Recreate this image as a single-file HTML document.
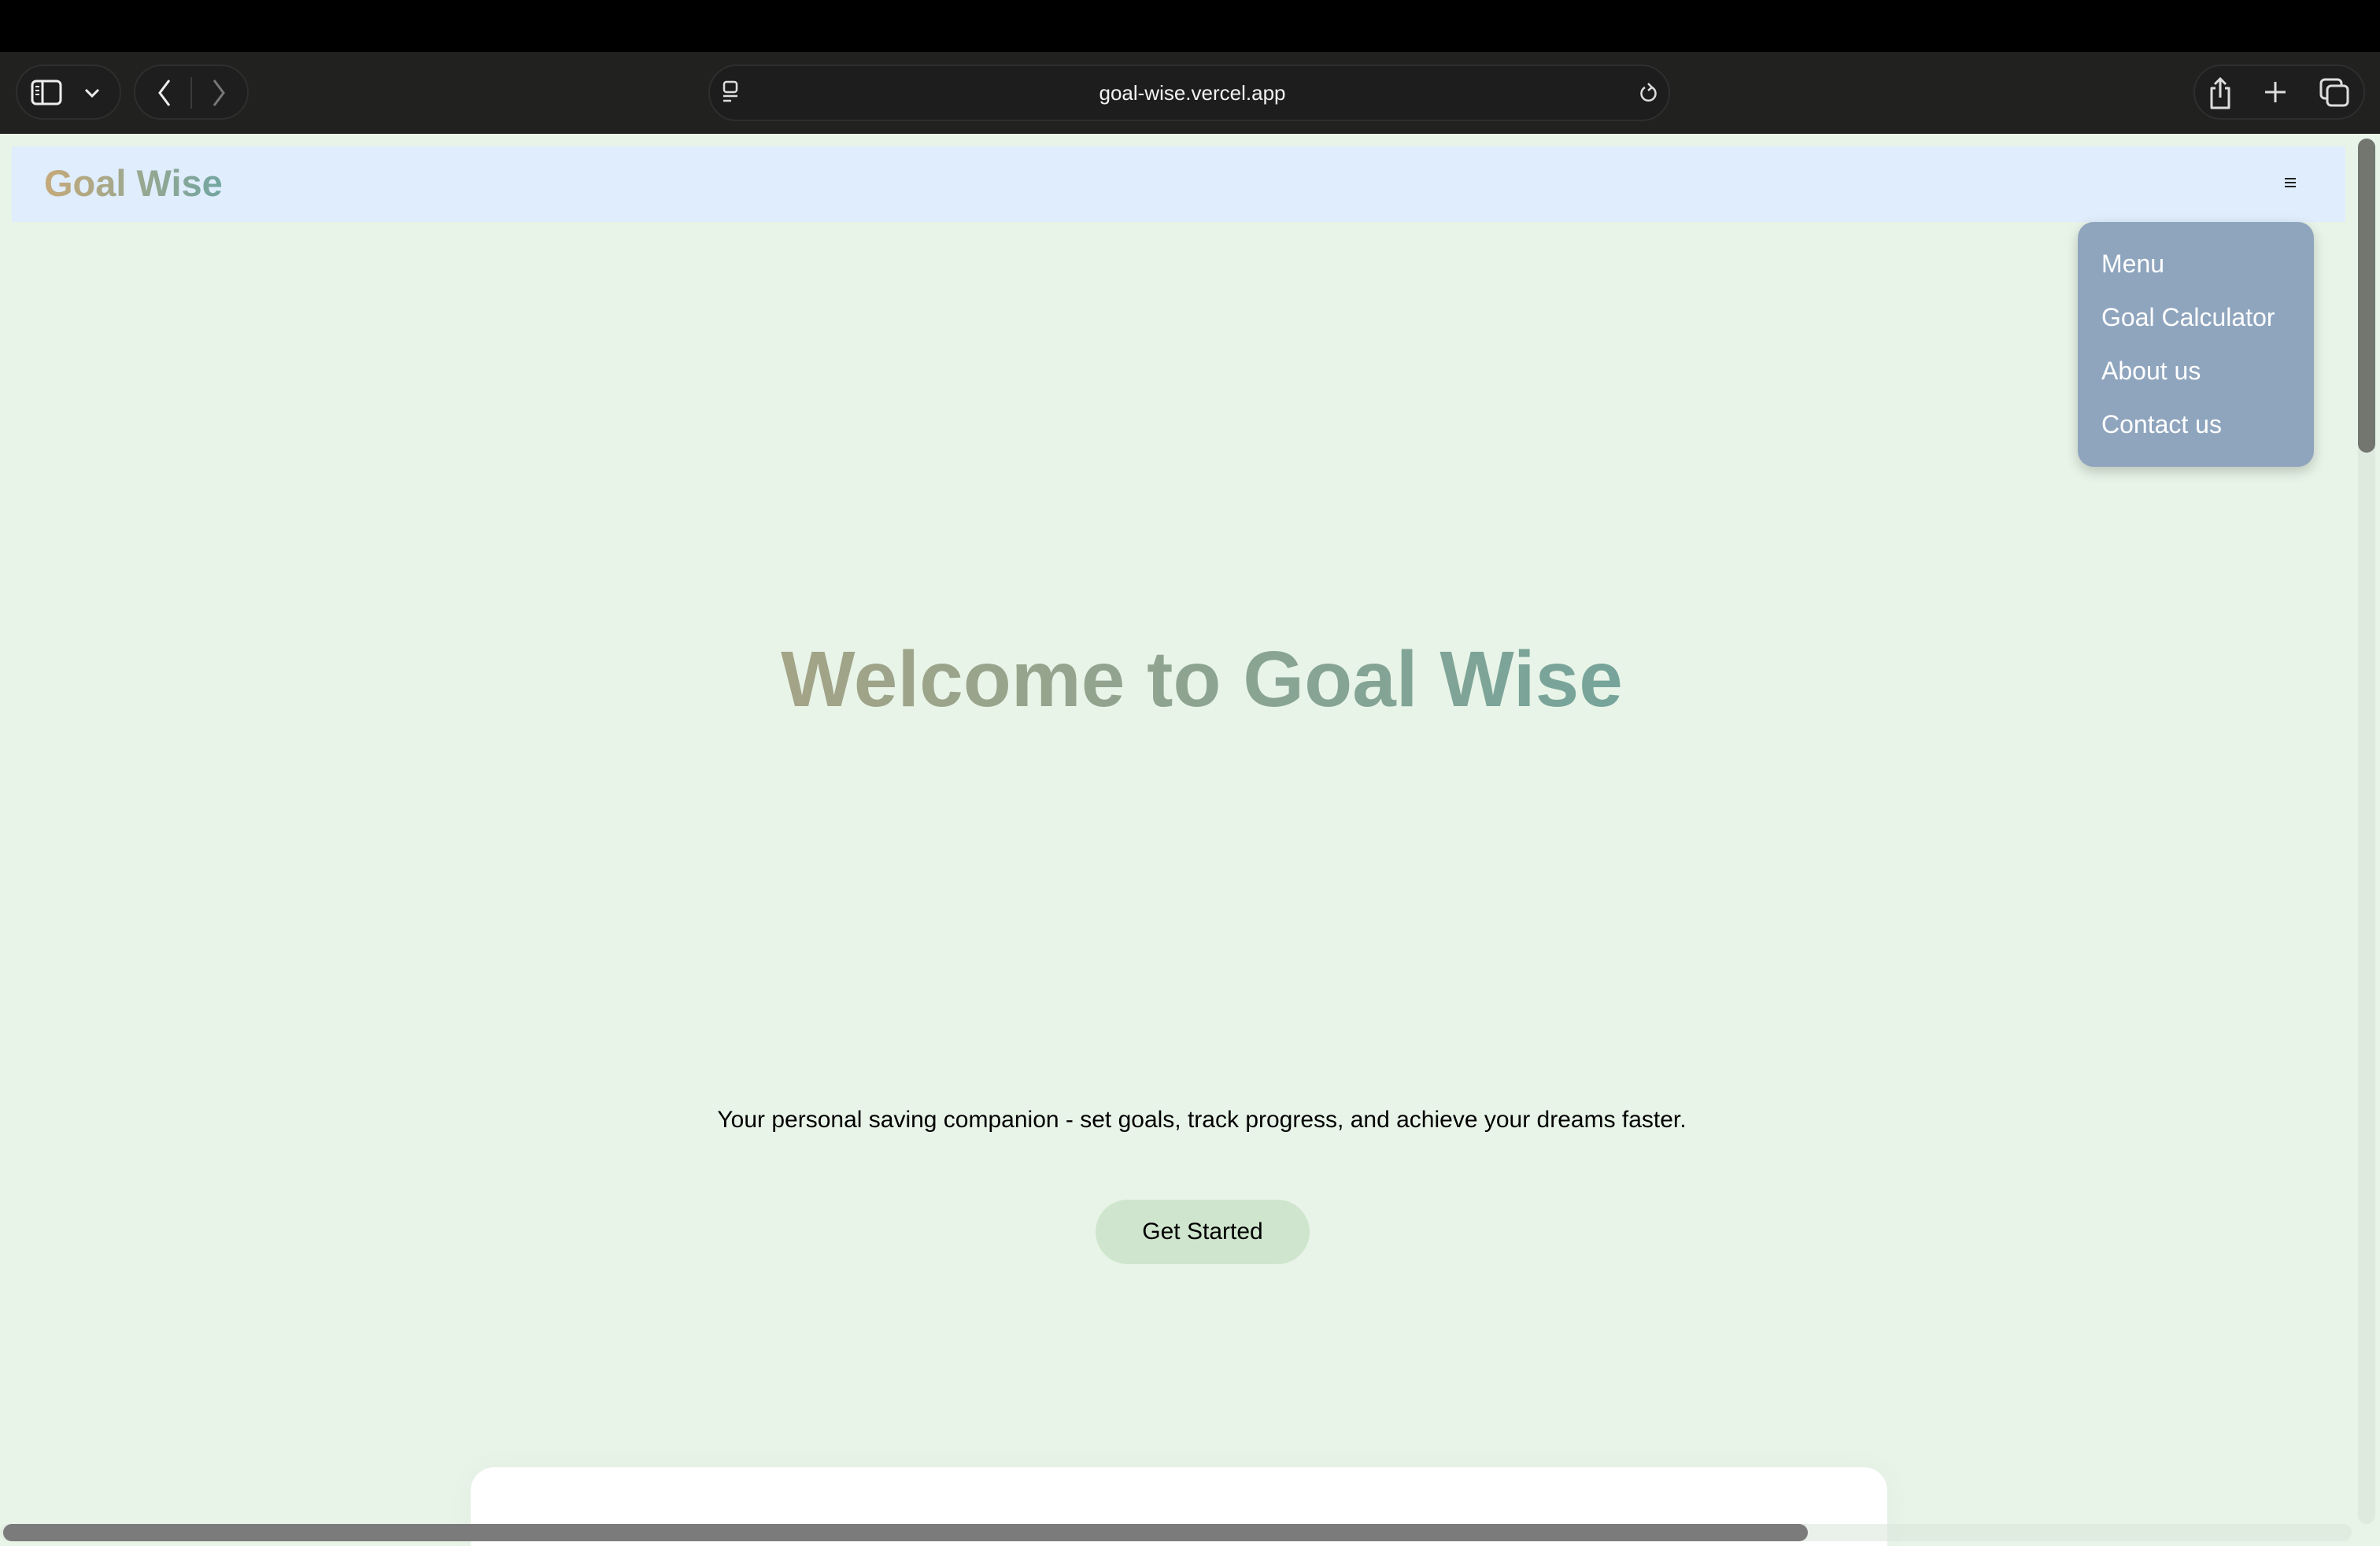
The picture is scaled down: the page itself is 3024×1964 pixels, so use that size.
<!DOCTYPE html>
<html><head><meta charset="utf-8">
<style>
*{margin:0;padding:0;box-sizing:border-box}
html,body{width:3024px;height:1964px;overflow:hidden;background:#e8f4e8;font-family:"Liberation Sans",Arial,sans-serif;position:relative}
.abs{position:absolute}
.grad{background:linear-gradient(90deg,#c6a97a,#72a6a1);-webkit-background-clip:text;background-clip:text;color:transparent}
.pill{position:absolute;border:2px solid #2e2e2e;border-radius:40px;background:#1e1e1e}
</style></head><body>
<div class="abs" style="left:0;top:0;width:3024px;height:66px;background:#000"></div>
<div class="abs" style="left:0;top:66px;width:3024px;height:104px;background:#212120"></div>
<div class="pill" style="left:20px;top:82px;width:134px;height:70px"></div>
<svg class="abs" style="left:38px;top:100px" width="44" height="36" viewBox="0 0 44 36"><rect x="3" y="3" width="36" height="29" rx="5" fill="none" stroke="#eee" stroke-width="3"/><line x1="16" y1="3" x2="16" y2="32" stroke="#eee" stroke-width="3"/><line x1="7" y1="10" x2="12" y2="10" stroke="#eee" stroke-width="2"/><line x1="7" y1="15" x2="12" y2="15" stroke="#eee" stroke-width="2"/><line x1="7" y1="20" x2="12" y2="20" stroke="#eee" stroke-width="2"/></svg>
<svg class="abs" style="left:104px;top:108px" width="26" height="20" viewBox="0 0 26 20"><polyline points="5,6 13,14 21,6" fill="none" stroke="#eee" stroke-width="3"/></svg>
<div class="pill" style="left:170px;top:82px;width:146px;height:70px"></div>
<svg class="abs" style="left:195px;top:98px" width="30" height="40" viewBox="0 0 30 40"><polyline points="20,4 8,20 20,36" fill="none" stroke="#eee" stroke-width="3"/></svg>
<div class="abs" style="left:242px;top:98px;width:2px;height:40px;background:#3a3a3a"></div>
<svg class="abs" style="left:262px;top:98px" width="30" height="40" viewBox="0 0 30 40"><polyline points="10,4 22,20 10,36" fill="none" stroke="#777" stroke-width="3"/></svg>
<div class="pill" style="left:900px;top:82px;width:1222px;height:72px;background:#1d1d1d"></div>
<svg class="abs" style="left:916px;top:102px" width="24" height="32" viewBox="0 0 24 32"><rect x="4" y="2" width="16" height="13" rx="3" fill="none" stroke="#ddd" stroke-width="2.5"/><line x1="3" y1="20" x2="21" y2="20" stroke="#ddd" stroke-width="2.5"/><line x1="3" y1="26" x2="13" y2="26" stroke="#ddd" stroke-width="2.5"/></svg>
<div class="abs" style="left:904px;top:100px;width:1222px;text-align:center;color:#f2f2f2;font-size:26px;line-height:36px">goal-wise.vercel.app</div>
<svg class="abs" style="left:2080px;top:102px" width="28" height="32" viewBox="0 0 28 32"><path d="M19 9 A9 9 0 1 1 10 9" fill="none" stroke="#ddd" stroke-width="2.5"/><polyline points="14,4 19,9 14,13" fill="none" stroke="#ddd" stroke-width="2.5"/></svg>
<div class="pill" style="left:2787px;top:82px;width:218px;height:70px"></div>
<svg class="abs" style="left:2804px;top:96px" width="34" height="44" viewBox="0 0 34 44"><path d="M11 16 H6 V41 H28 V16 H23" fill="none" stroke="#ddd" stroke-width="3" stroke-linejoin="round"/><line x1="17" y1="4" x2="17" y2="28" stroke="#ddd" stroke-width="3"/><polyline points="10,11 17,4 24,11" fill="none" stroke="#ddd" stroke-width="3"/></svg>
<svg class="abs" style="left:2876px;top:102px" width="30" height="30" viewBox="0 0 30 30"><line x1="15" y1="2" x2="15" y2="28" stroke="#ddd" stroke-width="3"/><line x1="2" y1="15" x2="28" y2="15" stroke="#ddd" stroke-width="3"/></svg>
<svg class="abs" style="left:2946px;top:98px" width="40" height="40" viewBox="0 0 40 40"><rect x="3" y="3" width="26" height="24" rx="5" fill="none" stroke="#ddd" stroke-width="3"/><rect x="11" y="11" width="26" height="25" rx="5" fill="#1e1e1e" stroke="#ddd" stroke-width="3"/></svg>

<div class="abs" style="left:15px;top:186px;width:2965px;height:96px;background:#dfedfd"></div>
<div class="abs grad" style="left:56px;top:203px;font-size:47px;font-weight:bold;line-height:60px">Goal Wise</div>
<svg class="abs" style="left:2903px;top:225px" width="14" height="14" viewBox="0 0 14 14"><rect x="0" y="1" width="14" height="2" fill="#222"/><rect x="0" y="6" width="14" height="2" fill="#222"/><rect x="0" y="11" width="14" height="2" fill="#222"/></svg>

<div class="abs" style="left:2640px;top:282px;width:300px;height:311px;background:#8fa5be;border-radius:20px;box-shadow:0 6px 16px rgba(0,0,0,0.2)"></div>
<div class="abs" style="left:2670px;top:301px;color:#fff;font-size:32px;line-height:68px">Menu<br>Goal Calculator<br>About us<br>Contact us</div>

<div class="abs" style="left:0;top:798px;width:3054px;text-align:center;font-size:100px;font-weight:bold;line-height:130px"><span style="background:linear-gradient(90deg,#a4a487,#76a49b);-webkit-background-clip:text;background-clip:text;color:transparent">Welcome to Goal Wise</span></div>
<div class="abs" style="left:0;top:1403px;width:3054px;text-align:center;font-size:30px;color:#000;line-height:40px">Your personal saving companion - set goals, track progress, and achieve your dreams faster.</div>
<div class="abs" style="left:1392px;top:1524px;width:272px;height:82px;border-radius:41px;background:#cfe5cd;color:#000;font-size:30px;line-height:82px;text-align:center">Get Started</div>

<div class="abs" style="left:598px;top:1864px;width:1800px;height:100px;background:#fff;border-radius:30px 30px 0 0;box-shadow:0 0 40px rgba(0,0,0,0.03)"></div>

<div class="abs" style="left:2996px;top:176px;width:22px;height:1760px;background:rgba(0,0,0,0.04);border-radius:11px"></div>
<div class="abs" style="left:2996px;top:176px;width:22px;height:399px;background:#72766f;border-radius:11px"></div>
<div class="abs" style="left:0;top:1936px;width:2988px;height:22px;background:rgba(220,230,220,0.6);border-radius:11px"></div>
<div class="abs" style="left:4px;top:1936px;width:2293px;height:22px;background:#7b7b7b;border-radius:11px"></div>
</body></html>
